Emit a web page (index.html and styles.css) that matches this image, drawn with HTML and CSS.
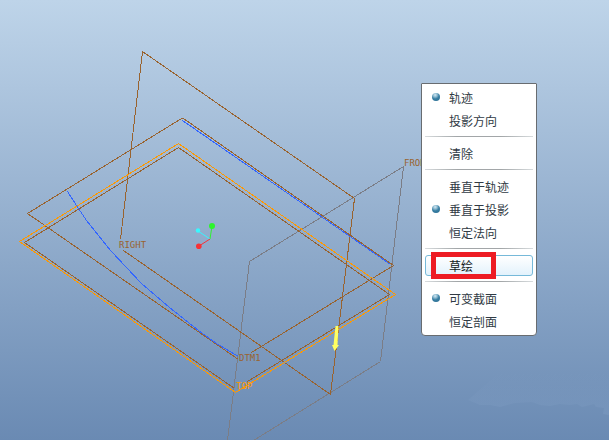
FILE: index.html
```html
<!DOCTYPE html>
<html lang="zh-CN">
<head>
<meta charset="utf-8">
<title>草绘</title>
<link rel="stylesheet" href="styles.css">
</head>
<body>
<main class="viewport">
  <svg class="scene" viewBox="0 0 609 440" role="img" aria-label="RIGHT, TOP, FRONT, DTM1">
    <defs>
      <linearGradient id="haze" x1="0" y1="0" x2="0" y2="1">
        <stop offset="0" stop-color="#7f9dc3" stop-opacity="0"/>
        <stop offset="1" stop-color="#7f9dc3" stop-opacity=".4"/>
      </linearGradient>
    </defs>
    <path fill="url(#haze)" d="M500 372H609V415L603 414 604 408 596 407 594 404 582 407 577 404 570 405 560 404 550 406 540 405 532 402 515 403 500 407 490 405 480 405 468 400Z"/>

    <g class="plane plane-front">
      <path d="M227.500 440.500L249.500 261.500L403.500 166.500L380.500 361.500L253.500 440.500"/>
    </g>
    <g class="plane plane-datum">
      <path d="M120.500 239.500L142.500 51.500L354.500 198.500L330.500 394.500L123.500 250.500"/>
      <path d="M238.500 359.500L27.500 213.500L181.500 118.500H183.500L393.500 265.500L251.500 352.500"/>
      <path d="M234.500 388.500L24.500 242.500L178.500 147.500L389.500 294.500L247.500 381.500"/>
    </g>
    <path class="plane plane-selected" d="M235.500 392.500L19.500 241.500L178.500 143.500L395.500 294.500Z"/>
    <g class="plane curve">
      <path d="M182.500 120.500L390.500 264.500"/>
      <path d="M67.500 191.500L78.500 208.500L86.500 220.500L110.500 250.500L141.500 283.500L169.500 307.500L198.500 330.500L216.500 343.500L238.500 356.500"/>
    </g>

    <g class="axis">
      <path stroke="#2ff32f" d="M210 239L212 226"/>
      <path stroke="#38f4ff" d="M210 239L198 231"/>
      <path stroke="#f53338" d="M210 239L199 246"/>
      <circle cx="212" cy="226" r="3" fill="#2cf52c"/>
      <circle cx="198" cy="230.500" r="2.200" fill="#38f8ff"/>
      <circle cx="198.800" cy="246.300" r="2.800" fill="#f73136"/>
    </g>
    <path fill="#ffff62" d="M335.500 326H338.500L337.500 345H339L334.500 351L332 345H333.500Z"/>

    <g class="label">
      <text x="119" y="248">RIGHT</text>
      <text x="239" y="361">DTM1</text>
      <text x="404" y="166">FRONT</text>
      <text class="label-selected" x="236" y="389">TOP</text>
    </g>
  </svg>

  <nav class="menu" aria-label="快捷菜单">
    <button class="item checked" type="button">轨迹</button>
    <button class="item" type="button">投影方向</button>
    <hr class="divider">
    <button class="item" type="button">清除</button>
    <hr class="divider">
    <button class="item" type="button">垂直于轨迹</button>
    <button class="item checked" type="button">垂直于投影</button>
    <button class="item" type="button">恒定法向</button>
    <hr class="divider">
    <button class="item active" type="button">草绘</button>
    <hr class="divider">
    <button class="item checked" type="button">可变截面</button>
    <button class="item" type="button">恒定剖面</button>
  </nav>
</main>
</body>
</html>
```
FILE: styles.css
```css
*,
*::before,
*::after {
  box-sizing: border-box;
}

body {
  margin: 0;
  font-family: "Noto Sans CJK SC", sans-serif;
}

.viewport {
  position: relative;
  min-height: 100vh;
  overflow: hidden;
  background: linear-gradient(#bed4e9, #6a8ab3);
}

.scene {
  display: block;
  width: 100%;
  height: auto;
}

.plane {
  fill: none;
  stroke-width: 1;
  shape-rendering: crispEdges;
}

.plane-front { stroke: #7b7d86; }
.plane-datum { stroke: #99632f; }
.plane-selected { stroke: #ff9900; }
.curve { stroke: #3366ff; }

.axis {
  stroke-width: 1;
}

.label {
  fill: #99632f;
  font-family: "DejaVu Sans Mono", monospace;
  font-size: 9px;
}

.label-selected {
  fill: #ff9900;
}

/* Floating context menu over the canvas */
.menu {
  position: absolute;
  left: 421px;
  top: 83px;
  display: flex;
  flex-direction: column;
  width: 116px;
  padding: 3px 3px 1px;
  border: 1px solid #686c70;
  border-radius: 1px 1px 4px 4px;
  background: #ffffff;
}

.item {
  position: relative;
  display: flex;
  align-items: center;
  width: 100%;
  height: 23px;
  padding: 0 0 2px 24px;
  border: 0;
  background: none;
  color: #303a44;
  font: inherit;
  font-size: 12px;
  line-height: 20px;
  white-space: nowrap;
}

.checked::before {
  content: "";
  position: absolute;
  left: 7px;
  top: 6px;
  width: 8px;
  height: 8px;
  border-radius: 50%;
  background: radial-gradient(circle at 40% 25%, #d5e8f2 0, #8ebbd1 25%, #397fa3 50%, #286b90 100%);
}

.active {
  height: 21px;
  margin-bottom: 2px;
  padding: 0 0 0 23px;
  border: 1px solid #76b9d9;
  border-radius: 3px;
  background: linear-gradient(#ffffff, #e3f2fc);
  color: #101820;
}

/* Red callout around the highlighted command */
.active::after {
  content: "";
  position: absolute;
  left: 5px;
  top: -4px;
  width: 65px;
  height: 27px;
  border: 5px solid #ed1c24;
}

.divider {
  width: 100%;
  height: 1px;
  margin: 3px 0 6px;
  border: 0;
  background: linear-gradient(90deg, #d8dcde, #a2a6a8 30%, #a2a6a8 70%, #d8dcde);
}
```
